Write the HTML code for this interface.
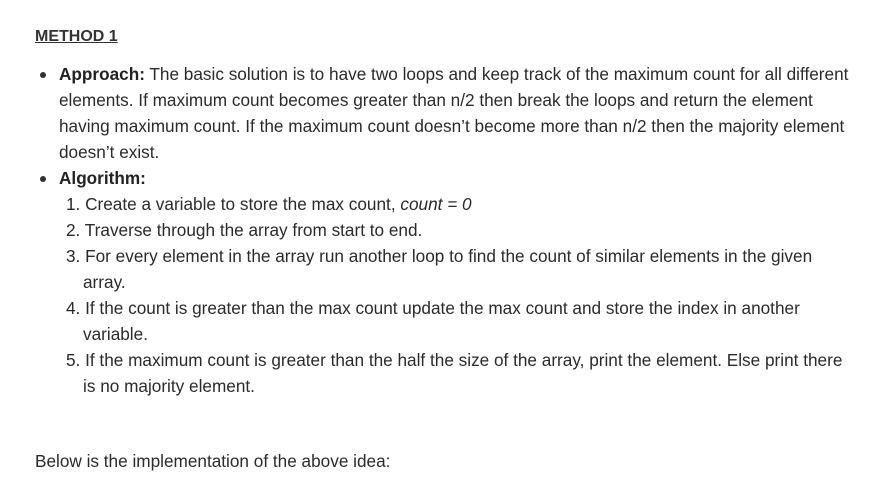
<!DOCTYPE html>
<html><head><style>
body{margin:0;background:#fff;width:887px;height:492px;overflow:hidden;font-family:"Liberation Sans",sans-serif;color:#2b2b2b;font-size:17.2px;}
.l{position:absolute;white-space:nowrap;line-height:26px;}
b{font-weight:bold;color:#222}
.dot{position:absolute;width:6px;height:6px;border-radius:50%;background:#333}
</style></head><body>
<div class="l" style="left:35px;top:24px;font-weight:bold;text-decoration:underline;font-size:16px;color:#333">METHOD 1</div>
<div class="dot" style="left:40px;top:72px"></div>
<div class="l" style="left:59px;top:61px"><b>Approach:</b> The basic solution is to have two loops and keep track of the maximum count for all different</div>
<div class="l" style="left:59px;top:87px">elements. If maximum count becomes greater than n/2 then break the loops and return the element</div>
<div class="l" style="left:59px;top:113px">having maximum count. If the maximum count doesn’t become more than n/2 then the majority element</div>
<div class="l" style="left:59px;top:139px">doesn’t exist.</div>
<div class="dot" style="left:40px;top:176px"></div>
<div class="l" style="left:59px;top:165px"><b>Algorithm:</b></div>
<div class="l" style="left:66px;top:191px">1. Create a variable to store the max count, <i>count = 0</i></div>
<div class="l" style="left:66px;top:217px">2. Traverse through the array from start to end.</div>
<div class="l" style="left:66px;top:243px">3. For every element in the array run another loop to find the count of similar elements in the given</div>
<div class="l" style="left:83px;top:269px">array.</div>
<div class="l" style="left:66px;top:295px">4. If the count is greater than the max count update the max count and store the index in another</div>
<div class="l" style="left:83px;top:321px">variable.</div>
<div class="l" style="left:66px;top:347px">5. If the maximum count is greater than the half the size of the array, print the element. Else print there</div>
<div class="l" style="left:83px;top:373px">is no majority element.</div>
<div class="l" style="left:35px;top:448px">Below is the implementation of the above idea:</div>
</body></html>
